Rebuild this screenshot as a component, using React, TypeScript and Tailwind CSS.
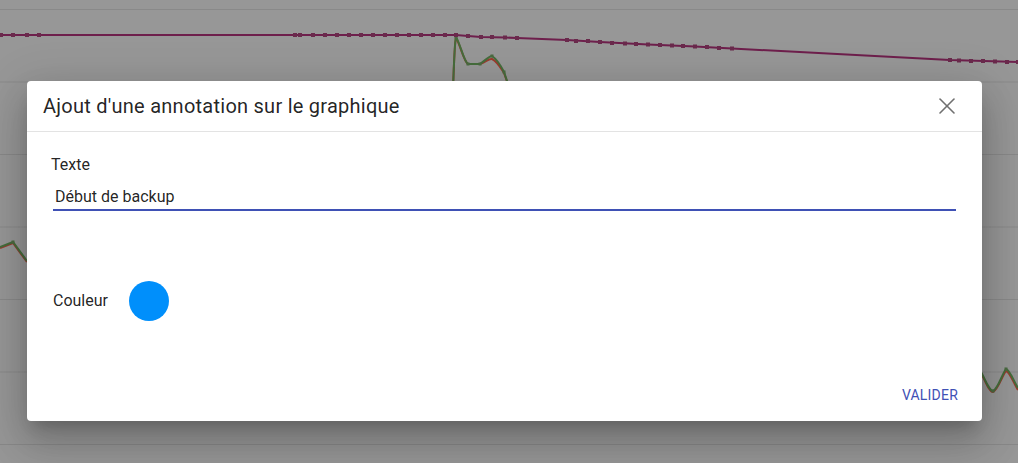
import { X } from "lucide-react";

const gridYs = [9.5, 82, 154.5, 227, 299.5, 372, 444.5];

const purplePts: [number, number][] = [
  [0, 35], [456, 35], [468, 36], [481, 37], [505, 37.5], [517, 38], [567, 40], [600, 42],
  [648, 44.5], [695, 46.5], [732, 48.5], [950, 60], [1018, 62],
];

const purpleMarks: [number, number][] = [
  [1, 35], [13, 35], [27, 35], [39, 35],
  [295, 35], [300, 35], [313, 35], [325, 35], [337, 35], [349, 35], [361, 35], [373, 35],
  [385, 35], [397, 35], [409, 35], [421, 35], [433, 35], [445, 35], [456, 35], [468, 36],
  [481, 37], [492, 37], [505, 37.5], [517, 38],
  [567, 40], [576, 41], [588, 41], [600, 42], [612, 43], [625, 43.5], [636, 44], [648, 44.5],
  [660, 45], [672, 45.5], [683, 46], [695, 46.5], [707, 47], [719, 48], [732, 48.5],
  [950, 60], [959, 60.5], [971, 61], [983, 61], [995, 61.5], [1007, 62], [1018, 62],
];

const Chart = () => (
  <svg className="absolute inset-0" width="1018" height="463" viewBox="0 0 1018 463">
    {gridYs.map((y) => (
      <line key={y} x1="0" x2="1018" y1={y} y2={y} stroke="#898989" strokeWidth="1" />
    ))}
    {/* red series (mostly hidden under green) */}
    <path d="M0 248 L13 243 L27 262" fill="none" stroke="#9c3b2e" strokeWidth="2" />
    <path d="M453 90 C454 60 455 40 456 38 C460 44 464 62 468 64 L480 64 C486 62 489 58 492 59 C498 62 502 70 504 73 L510 90" fill="none" stroke="#9c3b2e" strokeWidth="2" />
    <path d="M981 373 C985 380 989 392 993 392 C998 390 1002 376 1006 371 C1010 372 1014 384 1018 390" fill="none" stroke="#9c3b2e" strokeWidth="2" />
    {/* green series */}
    <path d="M0 247 L13 242 L27 261" fill="none" stroke="#456d3c" strokeWidth="2" />
    <path d="M453 90 C454 60 455 40 456 37 C460 43 464 62 468 64 L480 64 C486 60 489 56 492 56 C498 60 502 68 504 72 L510 90" fill="none" stroke="#456d3c" strokeWidth="2" />
    <path d="M981 372 C985 379 989 391 993 391 C998 389 1002 374 1006 369 C1010 370 1014 382 1018 388" fill="none" stroke="#456d3c" strokeWidth="2" />
    {[[13, 242], [456, 37], [468, 64], [480, 64], [492, 56], [504, 72], [993, 391], [1006, 369]].map(([x, y], i) => (
      <rect key={i} x={x - 1.5} y={y - 1.5} width="3" height="3" fill="#4a6a40" />
    ))}
    {/* purple series */}
    <polyline
      points={purplePts.map((p) => p.join(",")).join(" ")}
      fill="none"
      stroke="#6e1f4c"
      strokeWidth="2"
    />
    {purpleMarks.map(([x, y], i) => (
      <rect key={i} x={x - 2} y={y - 2} width="4" height="4" fill="#6a2a4c" />
    ))}
  </svg>
);

const App = () => {
  return (
    <div className="relative h-[463px] w-full overflow-hidden bg-[#979797] font-['Roboto','Liberation_Sans',sans-serif]">
      <Chart />

      {/* Dialog */}
      <div className="absolute left-[27px] top-[81px] flex h-[340px] w-[955px] flex-col rounded bg-white shadow-[0_11px_15px_-7px_rgba(0,0,0,0.2),0_24px_38px_3px_rgba(0,0,0,0.14),0_9px_46px_8px_rgba(0,0,0,0.12)]">
        <div className="flex h-[51px] items-center justify-between border-b border-[#e3e3e3] pl-4 pr-[21px]">
          <h2 className="text-[20px] leading-6 tracking-[0.25px] text-[rgba(0,0,0,0.87)]">Ajout d'une annotation sur le graphique</h2>
          <button className="text-[#707070]">
            <X className="h-7 w-7" strokeWidth={1.4} />
          </button>
        </div>

        <div className="flex flex-col px-6 pt-6">
          <label className="text-[16px] leading-[18px] text-[rgba(0,0,0,0.87)]">Texte</label>
          <div className="mx-[2px] mt-3 flex h-[25px] items-center border-b-2 border-[#3f51b5] pb-[2px] pl-[2px] text-[16px] text-[rgba(0,0,0,0.87)]">
            Début de backup
          </div>

          <div className="ml-[2px] mt-[70px] flex items-center gap-[21px]">
            <span className="text-[16px] text-[rgba(0,0,0,0.87)]">Couleur</span>
            <div className="h-10 w-10 rounded-full bg-[#008ffb]" />
          </div>
        </div>

        <div className="mt-auto flex justify-end p-2 pr-4">
          <button className="h-9 px-2 text-[14px] font-normal tracking-[0.2px] text-[#3f51b5]">VALIDER</button>
        </div>
      </div>
    </div>
  );
};

export default App;
